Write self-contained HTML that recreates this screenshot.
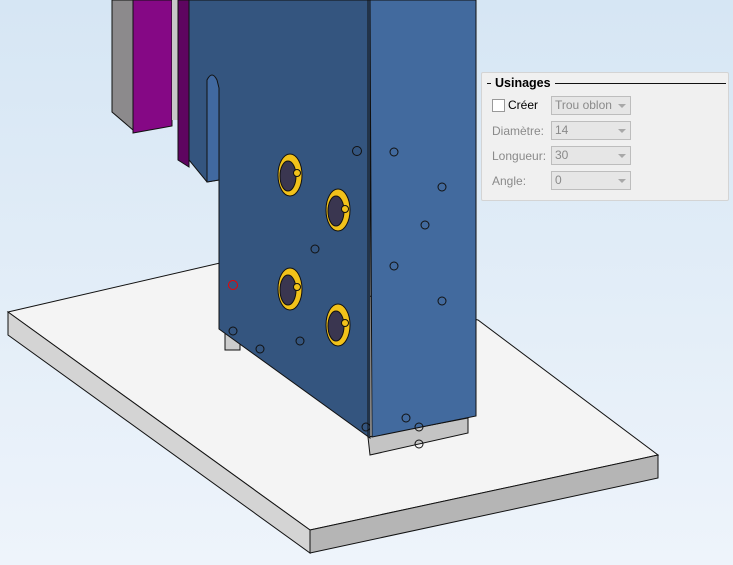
<!DOCTYPE html><html><head><style>
body{margin:0;width:733px;height:565px;overflow:hidden;background:linear-gradient(#d6e6f4,#eef4fb);font-family:"Liberation Sans",sans-serif;position:relative}
svg{position:absolute;left:0;top:0}
.p{position:absolute;left:481px;top:72px;width:246px;height:127px;background:#f0f0f0;border:1px solid #d4d4d4;border-radius:2px;font-size:12px}
.t{position:absolute;left:9px;top:3px;font-weight:bold;font-size:12.5px;background:#f0f0f0;padding:0 4px 0 4px}
.l{position:absolute;left:5px;right:2px;top:10px;border-top:1.5px solid #111}
.r{position:absolute;left:10px;color:#8a8a8a}
.s{position:absolute;left:69px;width:75px;height:17px;border:1px solid #bdbdbd;background:#e6e6e6;color:#8a8a8a;line-height:17px;padding-left:3px;box-sizing:content-box}
.s:after{content:"";position:absolute;right:4px;top:7px;border:4px solid transparent;border-top:4px solid #a8a8a8}
.cb{position:absolute;left:10px;top:26px;width:11px;height:11px;border:1px solid #999;background:#fff}
</style></head><body>
<svg width="733" height="565">
<polygon points="8,312 220,263 478,320 658,455 310,530" fill="#f4f4f4" stroke="#111"/>
<polygon points="8,312 310,530 310,553 8,335" fill="#d4d4d4" stroke="#111"/>
<polygon points="310,530 658,455 658,478 310,553" fill="#b5b5b5" stroke="#111"/>
<polygon points="112,0 133,0 133,130 112,112" fill="#8c8a8c" stroke="#111"/>
<polygon points="133,0 172,0 172,126 133,133" fill="#850885" stroke="#111"/>
<polygon points="172,0 178,0 178,120 172,120" fill="#c8c8c8"/>
<polygon points="178,0 189,0 189,167 178,160" fill="#5e0560" stroke="#111"/>
<polygon points="225,330 240,340 240,350 225,350" fill="#ccc" stroke="#111"/>
<polygon points="368,437 468,418 468,433 370,455" fill="#c4c4c4" stroke="#111"/>
<polygon points="189,0 370,0 370,438 219,329 219,180 207,182 189,160" fill="#34557f" stroke="#111"/>
<path d="M207,182 L207,80 Q212,70 217,80 L219,88 L219,180 Z" fill="#4169a0" stroke="#111"/>
<polygon points="370,0 476,0 476,416 372,437" fill="#426a9e" stroke="#111"/>
<line x1="368" y1="0" x2="368" y2="438" stroke="#111"/>
<g stroke="#111" fill="none">
<circle cx="357" cy="151" r="4.5"/><circle cx="394" cy="152" r="4"/><circle cx="442" cy="187" r="4"/><circle cx="425" cy="225" r="4"/><circle cx="315" cy="249" r="4"/><circle cx="394" cy="266" r="4"/><circle cx="442" cy="301" r="4"/><circle cx="233" cy="331" r="4"/><circle cx="260" cy="349" r="4"/><circle cx="300" cy="341" r="4"/><circle cx="406" cy="418" r="4"/><circle cx="366" cy="427" r="4"/><circle cx="419" cy="427" r="4"/><circle cx="419" cy="444" r="4"/>
</g>
<circle cx="233" cy="285" r="4.5" stroke="#e00" fill="none"/>
<g stroke="#111">
<ellipse cx="290" cy="175" rx="12" ry="21" fill="#f2c21a"/><ellipse cx="288" cy="176" rx="8" ry="15" fill="#3a3650"/><circle cx="297" cy="173" r="3.5" fill="#f2c21a"/>
<ellipse cx="338" cy="210" rx="12" ry="21" fill="#f2c21a"/><ellipse cx="336" cy="211" rx="8" ry="15" fill="#3a3650"/><circle cx="345" cy="209" r="3.5" fill="#f2c21a"/>
<ellipse cx="290" cy="289" rx="12" ry="21" fill="#f2c21a"/><ellipse cx="288" cy="290" rx="8" ry="15" fill="#3a3650"/><circle cx="297" cy="287" r="3.5" fill="#f2c21a"/>
<ellipse cx="338" cy="325" rx="12" ry="21" fill="#f2c21a"/><ellipse cx="336" cy="326" rx="8" ry="15" fill="#3a3650"/><circle cx="345" cy="323" r="3.5" fill="#f2c21a"/>
</g>
</svg>
<div class="p">
<div class="l"></div><div class="t">Usinages</div>
<div class="cb"></div><div style="position:absolute;left:26px;top:25px">Créer</div>
<div class="s" style="top:23px">Trou oblon</div>
<div class="r" style="top:51px">Diamètre:</div><div class="s" style="top:48px">14</div>
<div class="r" style="top:76px">Longueur:</div><div class="s" style="top:73px">30</div>
<div class="r" style="top:101px">Angle:</div><div class="s" style="top:98px">0</div>
</div>
</body></html>
